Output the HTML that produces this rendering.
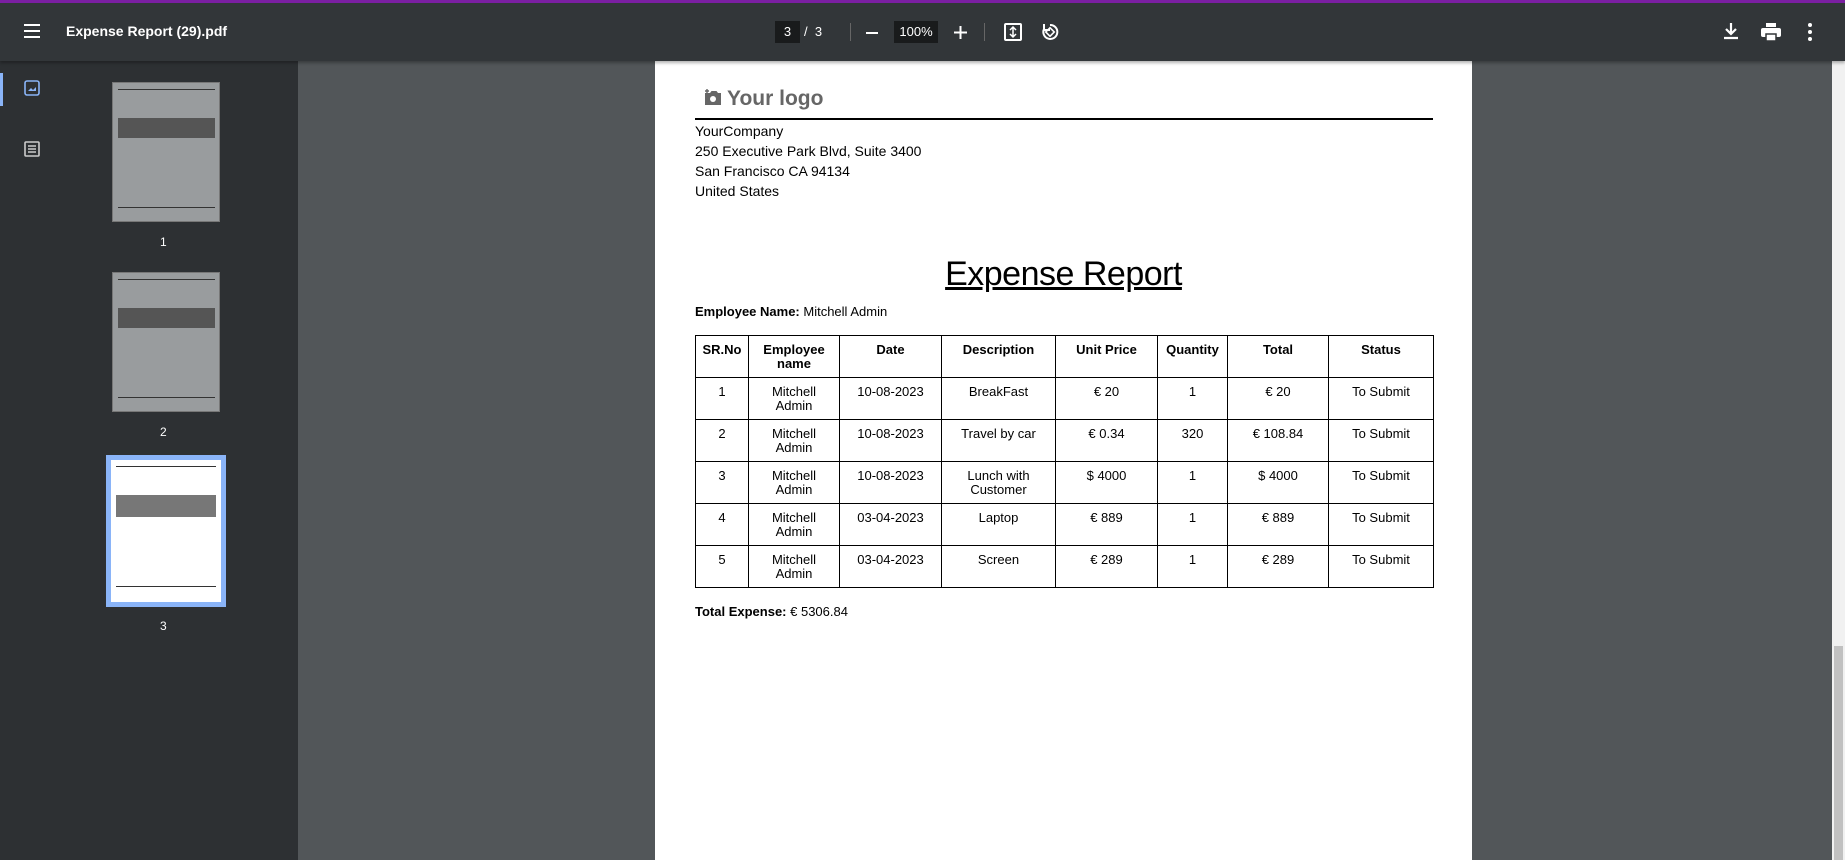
<!DOCTYPE html>
<html><head><meta charset="utf-8"><style>
*{margin:0;padding:0;box-sizing:border-box}
body{width:1845px;height:860px;overflow:hidden;background:#525659;font-family:"Liberation Sans",sans-serif;position:relative}
.abs{position:absolute}
#top{left:0;top:0;width:1845px;height:61px;background:#323639;border-top:3px solid #7b1fa2;box-shadow:0 2px 3px rgba(0,0,0,.3);z-index:3}
#side{left:0;top:61px;width:298px;height:799px;background:#2d3033}
#page{left:655px;top:61px;width:817px;height:799px;background:#fff}
.t{color:#fff;font-size:14px}
.thumb{background:#999c9e;border:1px solid #777}
.ml{position:absolute;background:#333}
table{border-collapse:collapse;position:absolute;left:40px;top:274px;font-size:13px;color:#000}
td,th{border:1px solid #000;text-align:center;vertical-align:top;padding:7px 2px 0;height:42px;line-height:14px}
th{font-weight:bold}
.txt{font-size:14px;color:#000}
</style></head><body>
<div id="top" class="abs">
 <svg class="abs" style="left:23px;top:20px" width="18" height="16"><path d="M1 2h16M1 8h16M1 14h16" stroke="#fff" stroke-width="2"/></svg>
 <div class="abs t" style="left:66px;top:20px;font-weight:bold">Expense Report (29).pdf</div>
 <div class="abs" style="left:775px;top:18px;width:25px;height:22px;background:#191b1c;color:#fff;font-size:13px;text-align:center;line-height:22px">3</div>
 <div class="abs t" style="left:804px;top:21px;font-size:13px">/ &nbsp;3</div>
 <div class="abs" style="left:850px;top:20px;width:1px;height:18px;background:#666"></div>
 <div class="abs" style="left:866px;top:29px;width:12px;height:2px;background:#fff"></div>
 <div class="abs" style="left:894px;top:18px;width:44px;height:22px;background:#191b1c;color:#fff;font-size:13px;text-align:center;line-height:22px">100%</div>
 <svg class="abs" style="left:954px;top:23px" width="13" height="13"><path d="M0 6.5h13M6.5 0v13" stroke="#fff" stroke-width="2"/></svg>
 <div class="abs" style="left:984px;top:20px;width:1px;height:18px;background:#666"></div>
 <svg class="abs" style="left:1004px;top:20px" width="18" height="18"><rect x="1" y="1" width="16" height="16" rx="1" fill="none" stroke="#fff" stroke-width="2"/><path d="M9 4v10M6 7l3-3 3 3M6 11l3 3 3-3" stroke="#fff" fill="none" stroke-width="1.5"/></svg>
 <svg class="abs" style="left:1040px;top:19px" width="20" height="20"><path d="M10 3a7 7 0 1 1-6 4" fill="none" stroke="#fff" stroke-width="2"/><path d="M4 2v6h6" fill="none" stroke="#fff" stroke-width="2"/><rect x="7" y="7" width="6" height="6" transform="rotate(45 10 10)" fill="none" stroke="#fff" stroke-width="1.6"/></svg>
 <svg class="abs" style="left:1724px;top:20px" width="14" height="17"><path d="M7 0v10M2 6l5 5 5-5M0 15h14" stroke="#fff" stroke-width="2.2" fill="none"/></svg>
 <svg class="abs" style="left:1761px;top:20px" width="20" height="18"><rect x="5" y="0" width="10" height="4" fill="#fff"/><rect x="0" y="5" width="20" height="9" rx="2" fill="#fff"/><rect x="5" y="11" width="10" height="7" fill="#fff" stroke="#323639" stroke-width="1.5"/></svg>
 <svg class="abs" style="left:1808px;top:20px" width="4" height="18"><circle cx="2" cy="2" r="2" fill="#fff"/><circle cx="2" cy="9" r="2" fill="#fff"/><circle cx="2" cy="16" r="2" fill="#fff"/></svg>
</div>
<div id="side" class="abs">
 <div class="abs" style="left:0;top:12px;width:3px;height:33px;background:#8ab4f8"></div>
 <svg class="abs" style="left:24px;top:19px" width="16" height="16"><rect x="1" y="1" width="14" height="14" rx="2" fill="none" stroke="#8ab4f8" stroke-width="1.6"/><path d="M4 11l3-3 2 2 3-3v4z" fill="#8ab4f8"/></svg>
 <svg class="abs" style="left:24px;top:80px" width="16" height="16"><rect x="1" y="1" width="14" height="14" rx="1" fill="none" stroke="#ccc" stroke-width="1.6"/><path d="M4 5h8M4 8h8M4 11h8" stroke="#ccc" stroke-width="1.4"/></svg>
 <div class="abs thumb" style="left:112px;top:21px;width:108px;height:140px">
  <div class="ml" style="left:5px;top:6px;width:97px;height:1px"></div>
  <div class="ml" style="left:5px;top:35px;width:97px;height:20px;background:#555"></div>
  <div class="ml" style="left:5px;top:124px;width:97px;height:1px"></div></div>
 <div class="abs t" style="left:160px;top:174px;font-size:12px">1</div>
 <div class="abs thumb" style="left:112px;top:211px;width:108px;height:140px">
  <div class="ml" style="left:5px;top:6px;width:97px;height:1px"></div>
  <div class="ml" style="left:5px;top:35px;width:97px;height:20px;background:#555"></div>
  <div class="ml" style="left:5px;top:124px;width:97px;height:1px"></div></div>
 <div class="abs t" style="left:160px;top:364px;font-size:12px">2</div>
 <div class="abs" style="left:106px;top:394px;width:120px;height:152px;background:#fff;border:5px solid #8ab4f8">
  <div class="ml" style="left:5px;top:6px;width:100px;height:1px"></div>
  <div class="ml" style="left:5px;top:35px;width:100px;height:22px;background:#777"></div>
  <div class="ml" style="left:5px;top:126px;width:100px;height:1px"></div></div>
 <div class="abs t" style="left:160px;top:558px;font-size:12px">3</div>
</div>
<div class="abs" style="left:1832px;top:61px;width:13px;height:799px;background:#f1f1f1"><div style="position:absolute;left:2px;top:585px;width:9px;height:214px;background:#c1c1c1"></div></div>
<div id="page" class="abs">
 <svg class="abs" style="left:49px;top:28px" width="18" height="17"><path d="M3 4h3l1.5-2h5L14 4h3v12H1V4h2z" fill="#666"/><circle cx="9" cy="10" r="3" fill="#fff"/><path d="M3 0v4M1 2h4" stroke="#666" stroke-width="1.4"/></svg>
 <div class="abs" style="left:72px;top:26px;color:#666;font-size:21px;font-weight:bold">Your logo</div>
 <div class="abs" style="left:40px;top:57px;width:738px;height:1.5px;background:#000"></div>
 <div class="abs txt" style="left:40px;top:60px;line-height:20px">YourCompany<br>250 Executive Park Blvd, Suite 3400<br>San Francisco CA 94134<br>United States</div>
 <div class="abs" style="left:0;width:817px;top:194px;text-align:center;font-size:34px;text-decoration:underline;color:#000;letter-spacing:-0.5px">Expense Report</div>
 <div class="abs txt" style="left:40px;top:243px;font-size:13px"><b>Employee Name:</b> Mitchell Admin</div>
 <table>
 <tr><th style="width:53px">SR.No</th><th style="width:91px">Employee<br>name</th><th style="width:102px">Date</th><th style="width:114px">Description</th><th style="width:102px">Unit Price</th><th style="width:70px">Quantity</th><th style="width:101px">Total</th><th style="width:105px">Status</th></tr>
 <tr><td>1</td><td>Mitchell<br>Admin</td><td>10-08-2023</td><td>BreakFast</td><td>€ 20</td><td>1</td><td>€ 20</td><td>To Submit</td></tr>
 <tr><td>2</td><td>Mitchell<br>Admin</td><td>10-08-2023</td><td>Travel by car</td><td>€ 0.34</td><td>320</td><td>€ 108.84</td><td>To Submit</td></tr>
 <tr><td>3</td><td>Mitchell<br>Admin</td><td>10-08-2023</td><td>Lunch with<br>Customer</td><td>$ 4000</td><td>1</td><td>$ 4000</td><td>To Submit</td></tr>
 <tr><td>4</td><td>Mitchell<br>Admin</td><td>03-04-2023</td><td>Laptop</td><td>€ 889</td><td>1</td><td>€ 889</td><td>To Submit</td></tr>
 <tr><td>5</td><td>Mitchell<br>Admin</td><td>03-04-2023</td><td>Screen</td><td>€ 289</td><td>1</td><td>€ 289</td><td>To Submit</td></tr>
 </table>
 <div class="abs txt" style="left:40px;top:543px;font-size:13px"><b>Total Expense:</b> € 5306.84</div>
</div>
</body></html>
